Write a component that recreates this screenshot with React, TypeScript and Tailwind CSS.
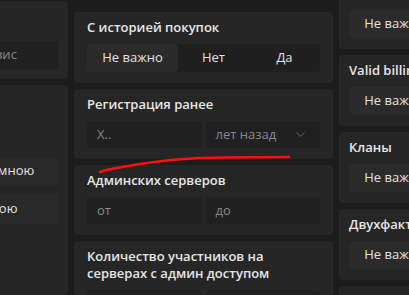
import { ChevronDown } from "lucide-react";

function Title({ children }: { children: React.ReactNode }) {
  return <div className="text-[13px] leading-[17px] font-semibold text-[#e6e6e6] mb-[8px]">{children}</div>;
}

function Segment({ selected = "Не важно" }: { selected?: string }) {
  const opts = ["Не важно", "Нет", "Да"];
  return (
    <div className="flex h-[28px] rounded-[4px] bg-[#1f1f1f] text-[13px] text-[#e2e2e2]">
      {opts.map((o, i) => (
        <div
          key={o}
          className={`flex items-center justify-center rounded-[4px] ${i === 0 ? "w-[91px] shrink-0" : "flex-1"} ${
            o === selected ? "bg-[#2b2b2b]" : ""
          }`}
        >
          {o}
        </div>
      ))}
    </div>
  );
}

function Card({ children, className = "" }: { children: React.ReactNode; className?: string }) {
  return <div className={`bg-[#262626] rounded-[4px] pt-[7px] pb-[11px] ${className}`}>{children}</div>;
}

function Field({ text, chevron = false }: { text: string; chevron?: boolean }) {
  return (
    <div className="flex-1 h-[27px] rounded-[3px] bg-[#202020] flex items-center justify-between pl-[10px] pr-[12px] text-[13px] text-[#8a8a8a]">
      <span>{text}</span>
      {chevron && <ChevronDown size={15} strokeWidth={1.5} className="text-[#6a6a6a]" />}
    </div>
  );
}

export default function App() {
  return (
    <div className="relative w-[409px] h-[295px] overflow-hidden bg-[#1c1c1c] flex gap-[6px] font-['Open_Sans',sans-serif]">
      {/* LEFT (cut off) */}
      <div className="shrink-0 w-[181px] ml-[-113px] flex flex-col gap-[6px] mt-[1px]">
        <div className="bg-[#262626] rounded-[4px] px-[10px] pt-[10px] pb-[10px]">
          <div className="text-[13px] leading-[17px] font-semibold text-[#e6e6e6] mb-[13px]">Сервис</div>
          <div className="h-[28px] rounded-[3px] bg-[#202020] flex items-center pl-[10px] text-[13px] text-[#8a8a8a]">
            Выберите сервис
          </div>
        </div>
        <div className="bg-[#262626] rounded-[4px] px-[10px] pt-[10px] pb-[10px] flex-1">
          <div className="text-[13px] leading-[17px] font-semibold text-[#e6e6e6] mb-[45px]">Серверы</div>
          <div className="flex flex-col gap-[9px] text-[13px] text-[#e2e2e2]">
            <div className="h-[28px] rounded-[3px] bg-[#2a2a2a] flex items-center pl-[10px]">Управляемые мною</div>
            <div className="h-[30px] rounded-[3px] bg-[#2a2a2a] flex items-center pl-[10px]">Созданные мною</div>
          </div>
        </div>
      </div>

      {/* MIDDLE */}
      <div className="shrink-0 w-[259px] flex flex-col gap-[6px] pt-[12px]">
        <Card className="px-[13px] pb-[10px]">
          <Title>С историей покупок</Title>
          <Segment />
        </Card>
        <Card className="px-[13px]">
          <Title>Регистрация ранее</Title>
          <div className="flex gap-[4px]">
            <Field text="X.." />
            <Field text="лет назад" chevron />
          </div>
        </Card>
        <Card className="px-[13px]">
          <Title>Админских серверов</Title>
          <div className="flex gap-[4px]">
            <Field text="от" />
            <Field text="до" />
          </div>
        </Card>
        <Card className="px-[13px]">
          <Title>
            Количество участников на
            <br />
            серверах с админ доступом
          </Title>
          <div className="flex gap-[4px]">
            <Field text="от" />
            <Field text="до" />
          </div>
        </Card>
      </div>

      {/* RIGHT (cut off) */}
      <div className="shrink-0 w-[259px] flex flex-col gap-[6px] mt-[-22px]">
        <Card className="px-[10px] pb-[10px]">
          <Title>Бан на платформе</Title>
          <Segment />
        </Card>
        <Card className="px-[10px] pb-[10px]">
          <Title>Valid billing</Title>
          <Segment />
        </Card>
        <Card className="px-[10px] pb-[10px]">
          <Title>Кланы</Title>
          <Segment />
        </Card>
        <Card className="px-[10px] pb-[6px]">
          <Title>Двухфакторная авторизация</Title>
          <Segment />
        </Card>
        <Card className="px-[10px] pb-[10px]">
          <Title>Доступ к API</Title>
          <Segment />
        </Card>
      </div>

      {/* red annotation stroke */}
      <svg className="absolute left-0 top-0 pointer-events-none" width="409" height="295">
        <path
          d="M100 172 L104 170.5 Q140 163 176 159.5 Q200 157.5 225 157.5 L289 157"
          fill="none"
          stroke="#ff1010"
          strokeWidth="2.5"
          strokeLinecap="round"
          strokeLinejoin="round"
        />
      </svg>
    </div>
  );
}
